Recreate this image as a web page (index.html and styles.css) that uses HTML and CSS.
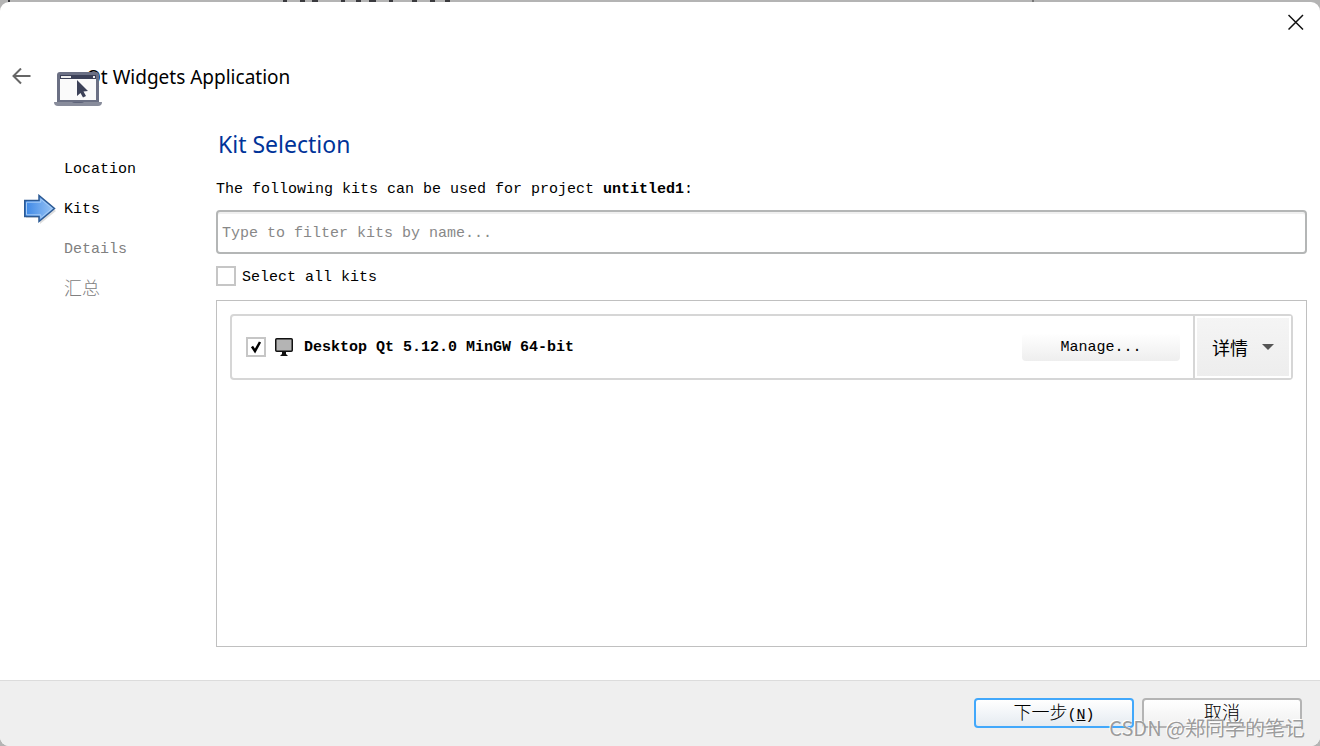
FILE: index.html
```
<!DOCTYPE html>
<html lang="zh-CN">
<head>
    <meta charset="utf-8" />
    <title>Qt Widgets Application</title>
    <link rel="stylesheet" href="styles.css">
</head>
<body>
    <svg class="behind" height="2" aria-hidden="true">
        <g fill="#3a3a3e">
            <rect x="8" width="2" height="2"/>
            <rect x="283" width="4" height="2"/>
            <rect x="300" width="5" height="2"/>
            <rect x="312" width="6" height="2"/>
            <rect x="341" width="4" height="2"/>
            <rect x="356" width="5" height="2"/>
            <rect x="369" width="7" height="2"/>
            <rect x="389" width="4" height="2"/>
            <rect x="412" width="5" height="2"/>
            <rect x="430" width="5" height="2"/>
            <rect x="445" width="5" height="2"/>
        </g>
        <rect x="1032" width="2" height="2" fill="#777"/>
    </svg>
    <div class="wizard">
        <div class="titlebar">
            <button class="close" aria-label="Close">
                <svg width="16" height="16" viewBox="0 0 16 16"><path d="M.5 1L15 15.500M15 1L.5 15.500" stroke="#111" stroke-width="1.500"/></svg>
            </button>
        </div>
        <div class="header">
            <button class="back" aria-label="Back">
                <svg width="20" height="18" viewBox="0 0 20 18"><path d="M9 .5L1.500 8L9 15.500M1.500 8H18.500" fill="none" stroke="#666" stroke-width="2"/></svg>
            </button>
            <svg class="app-icon" width="48" height="35" viewBox="0 0 48 35">
                <path d="M3 31V4Q3 1 6 1H42Q45 1 45 4V31Z" fill="#6b7084"/>
                <rect x="6" y="4" width="36" height="4" fill="#3c4158"/>
                <rect x="7" y="5" width="10" height="2" fill="#eee"/>
                <rect x="39" y="5" width="2" height="2" fill="#eee"/>
                <rect x="6" y="8" width="36" height="21" fill="#fafafa"/>
                <path d="M0 31H48Q48 35 44 35H4Q0 35 0 31Z" fill="#888c9b"/>
                <path d="M18 31H30Q29 32 27 32H21Q19 32 18 31Z" fill="#5e6379"/>
                <path d="M23 9L34 20L29.500 20.500L32 25L29 26.500L26.500 22L23 25Z" fill="#3c4158"/>
            </svg>
            <h1>Qt Widgets Application</h1>
        </div>
        <div class="main">
            <ol class="steps">
                <li>Location</li>
                <li class="current">
                    <svg width="32" height="30" viewBox="0 0 32 30" aria-hidden="true">
                        <defs>
                            <linearGradient id="arrow_fill">
                                <stop offset="0" stop-color="#3a86e6"/>
                                <stop offset="1" stop-color="#9cc6f5"/>
                            </linearGradient>
                        </defs>
                        <path d="M2 9H16V4L32 17L16 30V24H2Z" fill="#000" opacity=".13"/>
                        <path d="M.75 6.500H15V1.500L30.500 14.500L15 27.500V22.500H.75Z" fill="url(#arrow_fill)" stroke="#2c5a94" stroke-width="1.500"/>
                        <path d="M2.500 8.200H16.800V5.200L28 14.500L16.800 23.800V20.800H2.500Z" fill="none" stroke="#a6ccf7" stroke-width="1"/>
                    </svg>
                    Kits
                </li>
                <li class="pending">Details</li>
                <li class="pending">汇总</li>
            </ol>
            <div class="page">
                <h2>Kit Selection</h2>
                <p><label for="kit_filter">The following kits can be used for project <b>untitled1</b>:</label></p>
                <input type="text" id="kit_filter" placeholder="Type to filter kits by name..." />
                <div class="select-all">
                    <input type="checkbox" id="all_kits" /><label for="all_kits">Select all kits</label>
                </div>
                <div class="kits">
                    <div class="kit">
                        <input type="checkbox" id="kit_desktop" checked />
                        <label for="kit_desktop">
                            <svg width="18" height="18" viewBox="0 0 18 18" aria-hidden="true">
                                <rect x=".75" y=".75" width="16.500" height="12.500" rx="1" fill="#b4b4b4" stroke="#111" stroke-width="1.500"/>
                                <path d="M7 14H11V16L13 18H5L7 16Z" fill="#111"/>
                            </svg>
                            Desktop Qt 5.12.0 MinGW 64-bit
                        </label>
                        <button class="manage">Manage...</button>
                        <button class="details">详情
                            <svg width="12" height="6" viewBox="0 0 12 6" aria-hidden="true"><path d="M0 0H12L6 6Z" fill="#555"/></svg>
                        </button>
                    </div>
                </div>
            </div>
        </div>
        <div class="buttons">
            <button class="next">下一步<span>(<u>N</u>)</span></button>
            <button>取消</button>
        </div>
    </div>
    <div class="watermark">CSDN @郑同学的笔记</div>
</body>
</html>
```
FILE: styles.css
```
* {
    box-sizing: border-box;
}
body,
h1,h2,p,ol {
    margin: 0;
    padding: 0;
}
body {
    display: flex;
    flex-direction: column;
    min-height: 100vh;
    background: #b4b4b4;
    color: #000;
    font-family: "Liberation Mono", "Noto Sans CJK SC", monospace;
    font-size: 15px;
}
input,button {
    margin: 0;
    font-family: inherit;
    font-size: inherit;
    color: inherit;
}
button {
    padding: 0;
    border: none;
    background: none;
}
svg {
    display: block;
    flex: none;
}
.behind {
    width: 100%;
}
.wizard {
    flex: 1;
    display: flex;
    flex-direction: column;
    background: #fff;
    border-radius: 9px;
    overflow: hidden;
}
.titlebar {
    display: flex;
    justify-content: flex-end;
    height: 46px;
    padding: 12px 16px 0 0;
}
.titlebar .close {
    height: 16px;
}
.header {
    display: flex;
    align-items: center;
    height: 58px;
    padding-left: 12px;
}
.header .app-icon {
    align-self: flex-end;
    z-index: 1;
    margin-left: 22px;
    margin-right: -16px;
}
h1 {
    font-family: "Noto Sans", sans-serif;
    font-size: 19px;
    font-weight: normal;
}
.main {
    flex: 1;
    display: grid;
    grid-template-columns: 216px 1fr;
    padding: 0 13px 33px 0;
}
.steps {
    padding-top: 43px;
    list-style: none;
}
.steps li {
    display: flex;
    align-items: center;
    height: 40px;
    padding-left: 64px;
}
.steps .current {
    gap: 8px;
    padding-left: 24px;
}
.steps .pending {
    color: #808080;
}
.steps li:last-child {
    height: 35px;
    font-size: 18px;
    font-weight: 300;
}
.page {
    display: flex;
    flex-direction: column;
    padding-top: 22px;
}
h2 {
    padding-left: 2px;
    color: #003399;
    font-family: "Noto Sans", sans-serif;
    font-size: 23px;
    font-weight: normal;
    line-height: 32px;
}
p {
    margin-top: 18px;
    line-height: 24px;
}
#kit_filter {
    height: 44px;
    margin-top: 8px;
    padding: 3px 4px 0;
    border: 2px solid #b4b6b6;
    border-radius: 4px;
    box-shadow: inset 0 2px #f0f0f0;
}
#kit_filter::placeholder {
    color: #888;
}
.select-all {
    display: flex;
    align-items: center;
    gap: 6px;
    height: 20px;
    margin-top: 12px;
}
.select-all label {
    padding-top: 3px;
}
input[type=checkbox] {
    appearance: none;
    flex: none;
    width: 20px;
    height: 20px;
    border: 2px solid #c6c6c6;
    background: #fff;
}
input[type=checkbox]:checked {
    background: url("data:image/svg+xml,%3Csvg xmlns='http://www.w3.org/2000/svg' viewBox='0 0 16 16'%3E%3Cpath d='M4 7.500L7 12L12 3' fill='none' stroke='black' stroke-width='2.500'/%3E%3C/svg%3E");
}
.kits {
    flex: 1;
    margin-top: 14px;
    padding: 13px;
    border: 1px solid #c0c0c0;
}
.kit {
    display: flex;
    align-items: center;
    height: 66px;
    padding-left: 14px;
    border: 2px solid #d6d6d6;
    border-radius: 4px;
}
.kit label {
    flex: 1;
    display: flex;
    align-items: center;
    gap: 11px;
    padding-left: 9px;
    font-weight: bold;
}
.kit .manage {
    width: 158px;
    height: 28px;
    margin-right: 13px;
    border-radius: 4px;
    background: linear-gradient(#fff, #eee);
}
.kit .details {
    align-self: stretch;
    display: flex;
    align-items: center;
    justify-content: center;
    gap: 14px;
    width: 98px;
    border-left: 2px solid #d6d6d6;
    background: linear-gradient(#f5f5f5, #ededed);
    box-shadow: inset 0 0 0 2px #fff;
    font-size: 18px;
}
.buttons {
    display: flex;
    justify-content: flex-end;
    gap: 8px;
    padding: 17px 18px 18px;
    border-top: 1px solid #dcdcdc;
    background: #efefef;
}
.buttons button {
    width: 160px;
    height: 30px;
    padding-top: 2px;
    border: 2px solid #b4b4b4;
    border-radius: 4px;
    background: linear-gradient(#fff, #f0f0f0);
    font-size: 18px;
    font-weight: 300;
    line-height: 24px;
}
.buttons .next {
    border-color: #42a8fb;
    background: linear-gradient(#fff, #e5ebf1);
}
.buttons span {
    font-size: 15px;
}
.watermark {
    position: absolute;
    right: 15px;
    bottom: 4px;
    color: rgba(140, 140, 140, 0.85);
    font-family: "Noto Sans CJK SC", sans-serif;
    font-size: 20px;
    font-weight: 400;
    text-shadow: -1px -1px #fff;
    pointer-events: none;
}
```
